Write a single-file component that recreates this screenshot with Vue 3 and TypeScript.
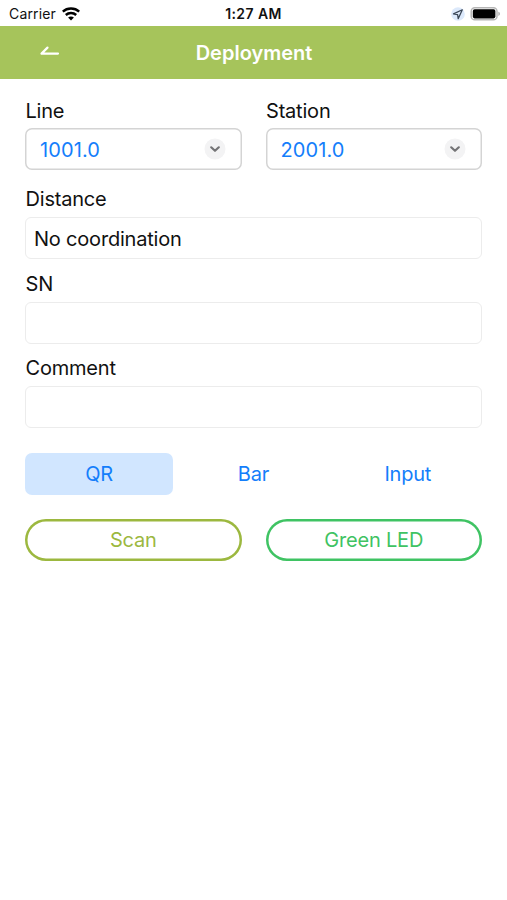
<script setup lang="ts">
import { ref } from 'vue'

interface Picker { label: string; value: string }
interface Field { label: string; value: string }

const pickers: Picker[] = [
  { label: 'Line', value: '1001.0' },
  { label: 'Station', value: '2001.0' },
]
const fields = ref<Field[]>([
  { label: 'Distance', value: 'No coordination' },
  { label: 'SN', value: '' },
  { label: 'Comment', value: '' },
])
const modes: string[] = ['QR', 'Bar', 'Input']
const activeMode = ref('QR')
</script>

<template>
  <div class="screen">
    <div class="status">
      <div class="carrier">
        <span>Carrier</span>
        <svg class="wifi" width="18" height="14" viewBox="0 0 18 14" fill="none" stroke="#000" stroke-width="2.4">
          <path d="M.8 4.700C5.300.5 12.700.5 17.200 4.700" />
          <path d="M3.800 8c2.900-2.700 7.500-2.700 10.400 0" />
          <path d="M9 13.400 6.100 10.500c1.600-1.500 4.200-1.500 5.800 0z" fill="#000" stroke="none" />
        </svg>
      </div>
      <div class="clock">1:27 AM</div>
      <div class="indicators">
        <svg width="14" height="14" viewBox="0 0 14 14">
          <circle cx="7" cy="7" r="6.8" fill="#dce9fb" />
          <path d="M11.3 2.8 2.5 6.9l4.1.7.6 4.1z" fill="none" stroke="#3a4656" stroke-width="1.25" stroke-linejoin="round" />
        </svg>
        <svg width="31" height="14" viewBox="0 0 31 14">
          <rect x="1.2" y=".8" width="25.8" height="12" rx="3.6" fill="#fff" stroke="#b5b5b5" stroke-width="1.5" />
          <rect x="2.800" y="2.200" width="22.600" height="9.200" rx="1.8" fill="#000" />
          <path d="M28.4 4.700c2 .6 2 3.600 0 4.200z" fill="#aaa" />
        </svg>
      </div>
    </div>

    <header class="nav">
      <button class="back" aria-label="Back">
        <svg width="22" height="14" viewBox="0 0 22 14" fill="none" stroke="#fff" stroke-width="2.2" stroke-linecap="round" stroke-linejoin="round">
          <path d="M8.500 1.600 2.500 7.600h16.500" />
        </svg>
      </button>
      <h1>Deployment</h1>
      <span></span>
    </header>

    <main>
      <div class="pair pickers">
        <div v-for="p in pickers" :key="p.label">
          <div class="label">{{ p.label }}</div>
          <button class="picker">
            <span class="value">{{ p.value }}</span>
            <svg width="22" height="22" viewBox="0 0 22 22">
              <circle cx="11" cy="11" r="10.500" fill="#f3f3f4" />
              <path d="m7.200 9.300 3.800 3.500 3.800-3.500" fill="none" stroke="#747476" stroke-width="2.200" stroke-linecap="round" stroke-linejoin="round" />
            </svg>
          </button>
        </div>
      </div>

      <label v-for="f in fields" :key="f.label" class="field">
        <span class="label">{{ f.label }}</span>
        <input v-model="f.value" type="text" />
      </label>

      <div class="modes">
        <button v-for="m in modes" :key="m" :class="{ active: m === activeMode }" @click="activeMode = m">{{ m }}</button>
      </div>

      <div class="pair actions">
        <button class="scan">Scan</button>
        <button class="led">Green LED</button>
      </div>
    </main>
  </div>
</template>

<style>
body {
  margin: 0;
  background: #fff;
}
</style>

<style scoped>
.screen {
  height: 900px;
  overflow: hidden;
  background: #fff;
  color: #111;
  font-family: Inter, 'Liberation Sans', sans-serif;
  font-size: 20px;
  letter-spacing: -0.2px;
}
* {
  box-sizing: border-box;
}
button,
input {
  font: inherit;
  letter-spacing: inherit;
  color: inherit;
  margin: 0;
  padding: 0;
  border: 0;
  background: none;
}
svg {
  display: block;
}
.status {
  height: 26px;
  display: grid;
  grid-template-columns: 1fr auto 1fr;
  align-items: center;
  padding: 1px 6px 0 9px;
  font-size: 14px;
  letter-spacing: 0.15px;
}
.carrier {
  display: flex;
  align-items: center;
  gap: 6px;
}
.clock {
  margin-left: -3px;
  font-weight: 600;
  letter-spacing: 0.4px;
}
.indicators {
  display: flex;
  justify-content: flex-end;
  align-items: center;
  gap: 5px;
}
.nav {
  height: 53px;
  display: grid;
  grid-template-columns: 1fr auto 1fr;
  align-items: center;
  padding: 0 0 0 39px;
  background: #a6c45b;
  color: #fff;
}
.nav h1 {
  margin: 0 0 0 -38px;
  font-size: 20px;
  line-height: 24px;
  font-weight: 600;
  letter-spacing: 0;
}
main {
  padding: 18px 25px 0;
}
.pair {
  display: grid;
  grid-template-columns: 1fr 1fr;
  gap: 24px;
}
.label {
  display: block;
  height: 31px;
  padding-left: 0.5px;
  line-height: 27px;
}
.pickers .label {
  line-height: 28px;
}
.picker {
  width: 100%;
  height: 42px;
  display: flex;
  align-items: center;
  justify-content: space-between;
  padding: 0 16px 0 15px;
  box-shadow: inset 0 0 0 1.5px #d4d4d4;
  border-radius: 7px;
  color: #147efb;
}
.value {
  padding-top: 2px;
  letter-spacing: 0.1px;
}
.field {
  display: block;
  height: 84.7px;
}
.pickers {
  height: 89px;
}
.field input {
  display: block;
  width: 100%;
  height: 42px;
  padding: 1px 8px 0;
  border: 1px solid #ececec;
  border-radius: 6px;
}
.modes {
  display: grid;
  grid-template-columns: repeat(3, 1fr);
  gap: 6px;
  padding-top: 13px;
}
.modes button {
  height: 42px;
  border-radius: 7px;
  color: #147efb;
}
.modes .active {
  background: #d1e6ff;
}
.actions {
  padding-top: 24px;
}
.actions button {
  height: 42px;
  box-shadow: inset 0 0 0 2.5px currentColor;
  border-radius: 21px;
}
.scan {
  color: #9cb83f;
}
.led {
  color: #3fc363;
}
</style>
